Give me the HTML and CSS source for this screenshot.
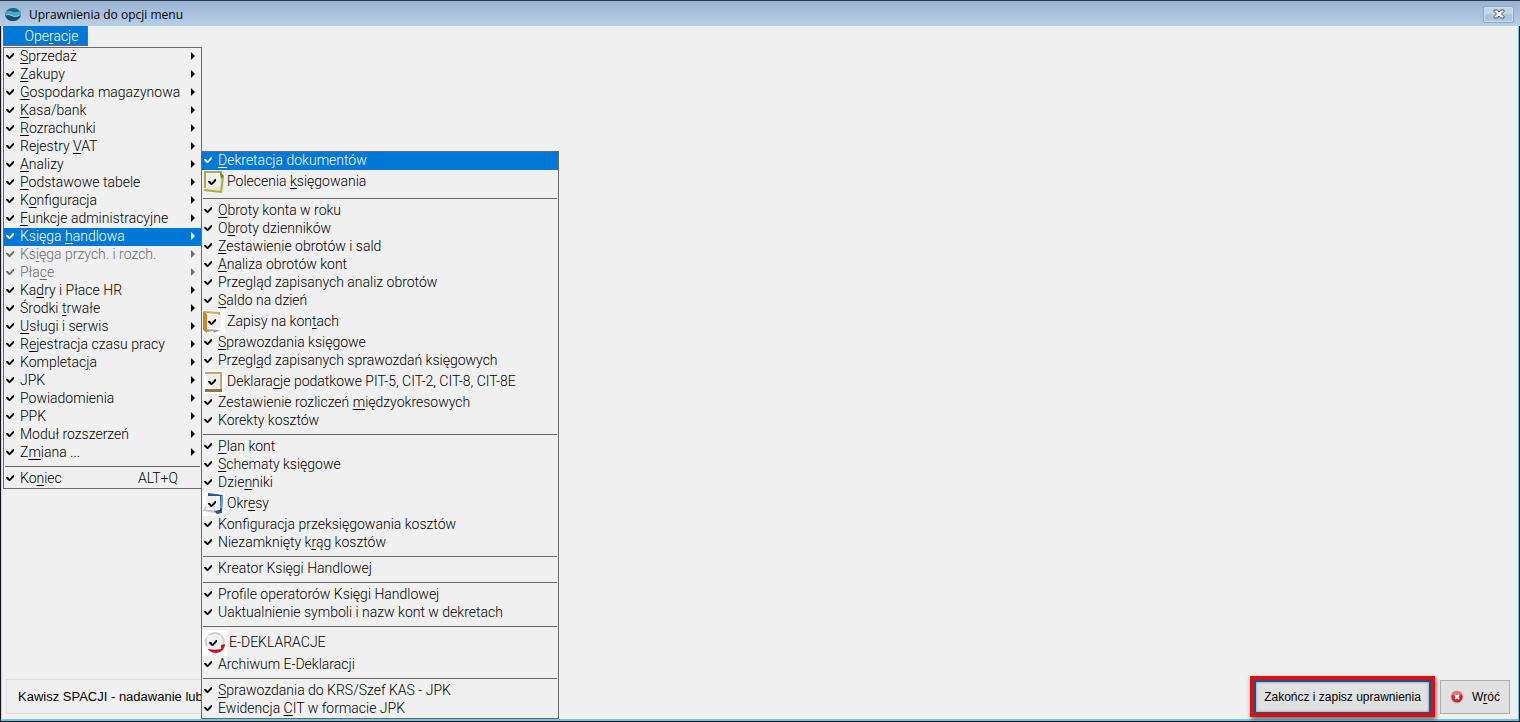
FILE: index.html
```html
<!DOCTYPE html>
<html lang="pl">
<head>
<meta charset="UTF-8" />
<meta name="viewport" content="width=device-width, initial-scale=1" />
<title>Uprawnienia do opcji menu</title>
<link rel="stylesheet" href="styles.css">
</head>

<body>

<!-- shared menu glyphs -->
<svg class="defs" aria-hidden="true">
  <symbol id="check" viewBox="0 0 9 8"><path d="M0 3h2l1.500 2L7 1h1v2L4 7H3L0 4z" fill="currentColor"/></symbol>
  <symbol id="arrow" viewBox="0 0 5 8"><path d="M1 0l4 4-4 4z" fill="currentColor"/></symbol>
</svg>

<div class="window">
  <header class="titlebar">
    <svg class="logo" viewBox="0 0 16 16" aria-hidden="true">
      <path d="M1 6C2 3 5 2 8 2s6 1 7 4c-3 1-5 1-7 0S3 5 1 6z" fill="#1b6487"/>
      <path d="M0 6c3-1 5 0 8 0s5 0 8-1v4c-3 2-6 2-8 1S3 9 0 9z" fill="#45a9c0"/>
      <path d="M0 9c3-1 5 0 8 1s5 1 8-1c-1 4-4 6-8 6S1 13 0 9z" fill="#17506f"/>
      <path d="M1 9c3-1 4 0 7 1s4 0 6-1" fill="none" stroke="#8fdbe2"/>
    </svg>
    <h1>Uprawnienia do opcji menu</h1>
    <button class="close" aria-label="Zamknij">
      <svg viewBox="0 0 12 10" aria-hidden="true">
        <path d="M1 1h3.500L6 3l1.500-2H11v1.500L8.500 5 11 7.500V9H7.500L6 7 4.500 9H1V7.500L3.500 5 1 2.500z" fill="#f4f6f8" stroke="#4c5663"/>
      </svg>
    </button>
  </header>

  <main class="client">
    <nav class="menubar">
      <button class="menu-title">Ope<u>r</u>acje</button>

      <ul class="menu menu-main">
        <li><button><svg class="check"><use href="#check"/></svg><span><u>S</u>przedaż</span><svg class="arrow"><use href="#arrow"/></svg></button></li>
        <li><button><svg class="check"><use href="#check"/></svg><span><u>Z</u>akupy</span><svg class="arrow"><use href="#arrow"/></svg></button></li>
        <li><button><svg class="check"><use href="#check"/></svg><span><u>G</u>ospodarka magazynowa</span><svg class="arrow"><use href="#arrow"/></svg></button></li>
        <li><button><svg class="check"><use href="#check"/></svg><span><u>K</u>asa/bank</span><svg class="arrow"><use href="#arrow"/></svg></button></li>
        <li><button><svg class="check"><use href="#check"/></svg><span><u>R</u>ozrachunki</span><svg class="arrow"><use href="#arrow"/></svg></button></li>
        <li><button><svg class="check"><use href="#check"/></svg><span>Rejestry <u>V</u>AT</span><svg class="arrow"><use href="#arrow"/></svg></button></li>
        <li><button><svg class="check"><use href="#check"/></svg><span><u>A</u>nalizy</span><svg class="arrow"><use href="#arrow"/></svg></button></li>
        <li><button><svg class="check"><use href="#check"/></svg><span><u>P</u>odstawowe tabele</span><svg class="arrow"><use href="#arrow"/></svg></button></li>
        <li><button><svg class="check"><use href="#check"/></svg><span>K<u>o</u>nfiguracja</span><svg class="arrow"><use href="#arrow"/></svg></button></li>
        <li><button><svg class="check"><use href="#check"/></svg><span><u>F</u>unkcje administracyjne</span><svg class="arrow"><use href="#arrow"/></svg></button></li>
        <li><button class="active"><svg class="check"><use href="#check"/></svg><span>Księga <u>h</u>andlowa</span><svg class="arrow"><use href="#arrow"/></svg></button></li>
        <li><button disabled><svg class="check"><use href="#check"/></svg><span>Ks<u>i</u>ęga przych. i rozch.</span><svg class="arrow"><use href="#arrow"/></svg></button></li>
        <li><button disabled><svg class="check"><use href="#check"/></svg><span>Pła<u>c</u>e</span><svg class="arrow"><use href="#arrow"/></svg></button></li>
        <li><button><svg class="check"><use href="#check"/></svg><span>Ka<u>d</u>ry i Płace HR</span><svg class="arrow"><use href="#arrow"/></svg></button></li>
        <li><button><svg class="check"><use href="#check"/></svg><span>Środki <u>t</u>rwałe</span><svg class="arrow"><use href="#arrow"/></svg></button></li>
        <li><button><svg class="check"><use href="#check"/></svg><span><u>U</u>sługi i serwis</span><svg class="arrow"><use href="#arrow"/></svg></button></li>
        <li><button><svg class="check"><use href="#check"/></svg><span>R<u>e</u>jestracja czasu pracy</span><svg class="arrow"><use href="#arrow"/></svg></button></li>
        <li><button><svg class="check"><use href="#check"/></svg><span>Kompletac<u>j</u>a</span><svg class="arrow"><use href="#arrow"/></svg></button></li>
        <li><button><svg class="check"><use href="#check"/></svg><span>JPK</span><svg class="arrow"><use href="#arrow"/></svg></button></li>
        <li><button><svg class="check"><use href="#check"/></svg><span>Powiadomienia</span><svg class="arrow"><use href="#arrow"/></svg></button></li>
        <li><button><svg class="check"><use href="#check"/></svg><span>PPK</span><svg class="arrow"><use href="#arrow"/></svg></button></li>
        <li><button><svg class="check"><use href="#check"/></svg><span>Moduł rozszerzeń</span><svg class="arrow"><use href="#arrow"/></svg></button></li>
        <li><button><svg class="check"><use href="#check"/></svg><span>Z<u>m</u>iana ...</span><svg class="arrow"><use href="#arrow"/></svg></button></li>
        <li class="sep"></li>
        <li><button><svg class="check"><use href="#check"/></svg><span>Ko<u>n</u>iec</span><kbd>ALT+Q</kbd></button></li>
      </ul>

      <ul class="menu menu-sub">
        <li><button class="active"><svg class="check"><use href="#check"/></svg><span><u>D</u>ekretacja dokumentów</span></button></li>
        <li><button class="with-icon">
          <svg class="icon" viewBox="0 0 23 24" aria-hidden="true">
            <path d="M2 1h19l1 3v16l-2 3-18-3z" fill="#e9eabf"/>
            <path d="M3 18V2h16v4M2 20l17 2 2-16" fill="none" stroke="#a9ac50" stroke-width="2"/>
            <path d="M4 3h14v14H4z" fill="#f0f0f0"/>
            <path d="M18 2l4 4-3 3z" fill="#767c31"/>
            <use href="#check" x="6" y="8" width="9" height="8"/>
          </svg><span>Polecenia <u>k</u>sięgowania</span></button></li>
        <li class="sep"></li>
        <li><button><svg class="check"><use href="#check"/></svg><span><u>O</u>broty konta w roku</span></button></li>
        <li><button><svg class="check"><use href="#check"/></svg><span>O<u>b</u>roty dzienników</span></button></li>
        <li><button><svg class="check"><use href="#check"/></svg><span><u>Z</u>estawienie obrotów i sald</span></button></li>
        <li><button><svg class="check"><use href="#check"/></svg><span><u>A</u>naliza obrotów kont</span></button></li>
        <li><button><svg class="check"><use href="#check"/></svg><span>Przegląd zapisanych analiz obrotów</span></button></li>
        <li><button><svg class="check"><use href="#check"/></svg><span><u>S</u>aldo na dzień</span></button></li>
        <li><button class="with-icon">
          <svg class="icon" viewBox="0 0 23 24" aria-hidden="true">
            <path d="M0 0h23v24H0z" fill="#fff"/>
            <path d="M1 1l4 3v19l-4-3z" fill="#c58a28"/>
            <path d="M2 2l15 1v3" fill="none" stroke="#d9a443" stroke-width="2"/>
            <path d="M4 19l14 1-6 3-1-2-6 1z" fill="#a5a18d"/>
            <path d="M5 5h14v13H5z" fill="#f0f0f0"/>
            <use href="#check" x="6" y="8" width="9" height="8"/>
          </svg><span>Zapisy na kon<u>t</u>ach</span></button></li>
        <li><button><svg class="check"><use href="#check"/></svg><span><u>S</u>prawozdania księgowe</span></button></li>
        <li><button><svg class="check"><use href="#check"/></svg><span>Przegl<u>ą</u>d zapisanych sprawozdań księgowych</span></button></li>
        <li><button class="with-icon">
          <svg class="icon" viewBox="0 0 23 24" aria-hidden="true">
            <path d="M2 0h21v24H2z" fill="#fff"/>
            <path d="M3 3h16v17" fill="none" stroke="#c8a869" stroke-width="2"/>
            <path d="M3 19h17v3H3z" fill="#917642"/>
            <path d="M4 4h14v14H4z" fill="#f0f0f0"/>
            <use href="#check" x="6" y="8" width="9" height="8"/>
          </svg><span>Deklara<u>c</u>je podatkowe PIT-5, CIT-2, CIT-8, CIT-8E</span></button></li>
        <li><button><svg class="check"><use href="#check"/></svg><span>Zestawienie rozliczeń <u>m</u>iędzyokresowych</span></button></li>
        <li><button><svg class="check"><use href="#check"/></svg><span>Korekty kosztów</span></button></li>
        <li class="sep"></li>
        <li><button><svg class="check"><use href="#check"/></svg><span><u>P</u>lan kont</span></button></li>
        <li><button><svg class="check"><use href="#check"/></svg><span><u>S</u>chematy księgowe</span></button></li>
        <li><button><svg class="check"><use href="#check"/></svg><span>Dzie<u>n</u>niki</span></button></li>
        <li><button class="with-icon">
          <svg class="icon" viewBox="0 0 23 24" aria-hidden="true">
            <path d="M1 0h22v24H1z" fill="#fff"/>
            <path d="M3 14l-2 5 12 2V18z" fill="#c5c9ce"/>
            <path d="M6 1l15 2-1 18-5 1-3-3 5-1V5L6 4z" fill="#24559c"/>
            <path d="M19 4l2-1-1 12-2 2z" fill="#6f9bd0"/>
            <path d="M4 4h14v14H4z" fill="#f0f0f0"/>
            <use href="#check" x="6" y="8" width="9" height="8"/>
          </svg><span>Okr<u>e</u>sy</span></button></li>
        <li><button><svg class="check"><use href="#check"/></svg><span>Konf<u>i</u>guracja przeksięgowania kosztów</span></button></li>
        <li><button><svg class="check"><use href="#check"/></svg><span>Niezamknięty k<u>r</u>ąg kosztów</span></button></li>
        <li class="sep"></li>
        <li><button><svg class="check"><use href="#check"/></svg><span>Kreator Księgi Handlowej</span></button></li>
        <li class="sep"></li>
        <li><button><svg class="check"><use href="#check"/></svg><span>Profile operatorów Księgi Handlowej</span></button></li>
        <li><button><svg class="check"><use href="#check"/></svg><span>Uaktualnienie symboli i nazw kont w dekretach</span></button></li>
        <li class="sep"></li>
        <li><button class="with-icon large">
          <svg class="icon" viewBox="0 0 25 26" aria-hidden="true">
            <path d="M0 0h25v26H0z" fill="#fff"/>
            <circle cx="13" cy="12" r="9" fill="#f0f0f0" stroke="#cfcfcf" stroke-width="2"/>
            <path d="M2 10l3-2v6z" fill="#d0d0d0"/>
            <path d="M5 18c3 2 8 2 14 1v-4l4-1c0 5-4 9-9 9-4 0-7-2-9-5z" fill="#cf1721"/>
            <path d="M5 5h14v14H5z" fill="#f0f0f0"/>
            <use href="#check" x="7" y="9" width="9" height="8"/>
          </svg><span>E-DEKLARACJE</span></button></li>
        <li><button><svg class="check"><use href="#check"/></svg><span>Archiwum E-Deklaracji</span></button></li>
        <li class="sep"></li>
        <li><button><svg class="check"><use href="#check"/></svg><span><u>S</u>prawozdania do KRS/Szef KAS - JPK</span></button></li>
        <li><button><svg class="check"><use href="#check"/></svg><span>Ewidencja <u>C</u>IT w formacie JPK</span></button></li>
      </ul>
    </nav>

    <footer class="footer">
      <p class="hint">Kawisz SPACJI - nadawanie lub</p>
      <div class="highlight"><button class="btn btn-default">Zakończ i zapisz uprawnienia</button></div>
      <button class="btn btn-back">
        <svg viewBox="0 0 14 14" aria-hidden="true">
          <circle cx="7" cy="7" r="6" fill="#c9272b" stroke="#ccb0b0"/>
          <path d="M2 5a5 4 0 0 1 10 0z" fill="#e07472"/>
          <path d="M5 5l4 4M9 5l-4 4" stroke="#fff" stroke-width="2"/>
        </svg>
        <span>W<u>r</u>óć</span>
      </button>
    </footer>
  </main>
</div>

</body>
</html>
```

FILE: styles.css
```css
* {
  box-sizing: border-box;
}
body {
  margin: 0;
  background: #10151c;
  font-family: "Liberation Sans", Arial, sans-serif;
  font-size: 13px;
  color: #000;
}
button {
  font: inherit;
  color: inherit;
  border: none;
  padding: 0;
  background: none;
}
u {
  text-underline-offset: 2px;
  text-decoration-thickness: 1px;
}
.defs {
  position: absolute;
  width: 0;
  height: 0;
}
.window {
  position: relative;
  display: flex;
  flex-direction: column;
  min-height: 100vh;
}

/* title bar */
.titlebar {
  display: flex;
  align-items: center;
  height: 26px;
  padding: 2px 6px 1px 5px;
  border-top: 1px solid #2c3a50;
  background: linear-gradient(#9bb3d2, #b8cfe9);
}
.logo {
  width: 16px;
  height: 16px;
}
.titlebar h1 {
  flex: 1;
  margin: 0 0 0 8px;
  font-family: "Open Sans", sans-serif;
  font-size: 12px;
  font-weight: normal;
}
.close {
  display: flex;
  align-items: center;
  justify-content: center;
  width: 31px;
  height: 17px;
  border: 1px solid #8da5c4;
  border-radius: 2px;
  background: linear-gradient(#c2d5ec 50%, #aec5e0 50%);
  box-shadow: inset 0 0 0 1px #cfdff2;
}
.close svg {
  width: 12px;
  height: 10px;
}

/* client area */
.client {
  flex: 1;
  display: flex;
  flex-direction: column;
  justify-content: space-between;
  margin: 0 1px 1px;
  border: 1px solid #6fc4d8;
  border-width: 0 1px 2px;
  border-left-color: #d6cfe4;
  background: #f0f0f0;
}
.menubar {
  font-family: Roboto, "Liberation Sans", sans-serif;
  font-size: 14px;
  font-weight: 300;
}
.menu-title {
  display: block;
  width: 85px;
  height: 20px;
  margin-left: 1px;
  padding-left: 12px;
  border: 1px solid #6a6a72;
  border-top: none;
  background: #0078d7;
  color: #fff;
}

/* open menus */
.menu {
  position: absolute;
  margin: 0;
  padding: 0;
  list-style: none;
  border: 1px solid #696969;
  background: #f0f0f0;
}
.menu-main {
  top: 47px;
  left: 3px;
  width: 199px;
}
.menu-sub {
  top: 151px;
  left: 201px;
  width: 358px;
}
.menu button {
  display: flex;
  align-items: center;
  width: 100%;
  height: 18px;
  padding: 0 6px 2px 2px;
  line-height: 16px;
  text-align: left;
  white-space: nowrap;
}
.menu button span {
  flex: 1;
  margin-left: 5px;
}
.menu button.active {
  background: #0078d7;
  color: #fff;
}
.menu button:disabled {
  color: #6d6d6d;
}
.menu button.with-icon {
  height: 24px;
  padding: 0;
}
.menu button.large {
  height: 26px;
}
.menu .with-icon span {
  margin-left: 2px;
  padding-bottom: 2px;
}
.check {
  width: 9px;
  height: 8px;
}
.arrow {
  width: 5px;
  height: 8px;
}
.icon {
  width: 23px;
  height: 24px;
}
.large .icon {
  width: 25px;
  height: 26px;
}
.menu kbd {
  margin-right: 17px;
  font: inherit;
}
.sep {
  height: 8px;
  padding: 4px 1px 0;
}
.sep::before {
  content: "";
  display: block;
  border-top: 1px solid #696969;
}

/* bottom bar */
.footer {
  display: flex;
  align-items: center;
  padding: 0 8px 2px 4px;
}
.hint {
  width: 300px;
  margin: 0 auto 0 0;
  padding: 0 11px;
  border: 1px solid #dcdcdc;
  line-height: 33px;
}
.highlight {
  margin-right: 5px;
  border: 4px solid #dc0f14;
  box-shadow: 1px 2px 4px rgba(0, 0, 0, 0.6);
}
.btn {
  display: flex;
  align-items: center;
  justify-content: center;
  height: 34px;
  border: 1px solid #adadad;
  background: #e1e1e1;
  font-size: 12px;
}
.btn-default {
  width: 177px;
  height: 33px;
  border: 2px solid #14568c;
  border-bottom-width: 1px;
  box-shadow: inset 0 0 3px rgba(0, 0, 0, 0.4);
}
.btn-back {
  gap: 8px;
  width: 70px;
}
.btn-back svg {
  width: 14px;
  height: 14px;
}
```
